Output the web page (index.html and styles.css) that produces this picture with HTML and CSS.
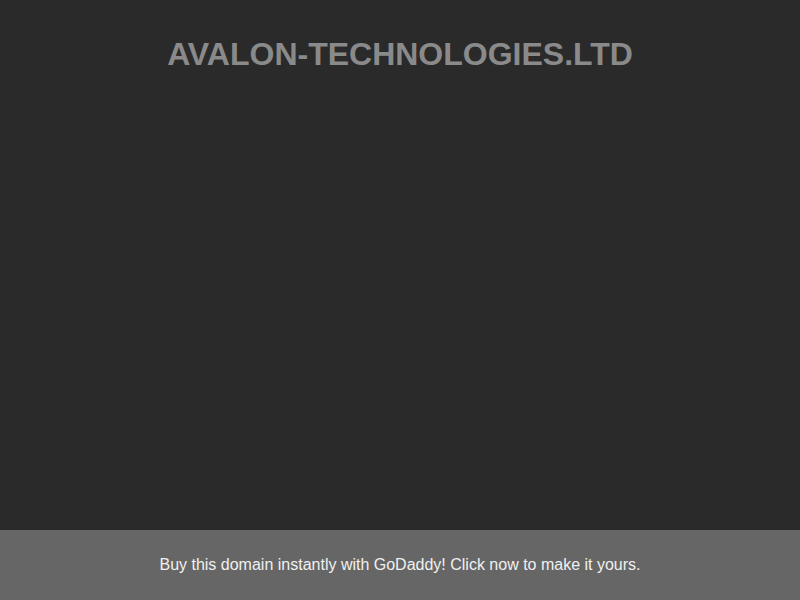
FILE: index.html
```html
<!DOCTYPE html>
<html>
<head>
<meta charset="utf-8">
<link rel="stylesheet" href="styles.css">
</head>
<body>
<div class="page">
  <header class="header">
    <h1 class="domain">AVALON-TECHNOLOGIES.LTD</h1>
  </header>
  <main class="content"></main>
  <footer class="banner">
    <a class="banner-link">Buy this domain instantly with GoDaddy! Click now to make it yours.</a>
  </footer>
</div>
</body>
</html>
```
FILE: styles.css
```css
html, body {
  margin: 0;
  padding: 0;
  height: 100%;
  background: #2a2a2a;
  font-family: "Liberation Sans", Arial, sans-serif;
}
.page {
  display: flex;
  flex-direction: column;
  height: 100vh;
}
.header {
  display: flex;
  justify-content: center;
  padding-top: 36px;
}
.domain {
  margin: 0;
  font-size: 32px;
  line-height: 37px;
  font-weight: bold;
  color: #8a8a8a;
}
.content {
  flex: 1;
}
.banner {
  height: 70px;
  background: #666666;
  display: flex;
  align-items: center;
  justify-content: center;
}
.banner-link {
  color: #f0f0f0;
  font-size: 16px;
  line-height: 18px;
  text-decoration: none;
}
```
